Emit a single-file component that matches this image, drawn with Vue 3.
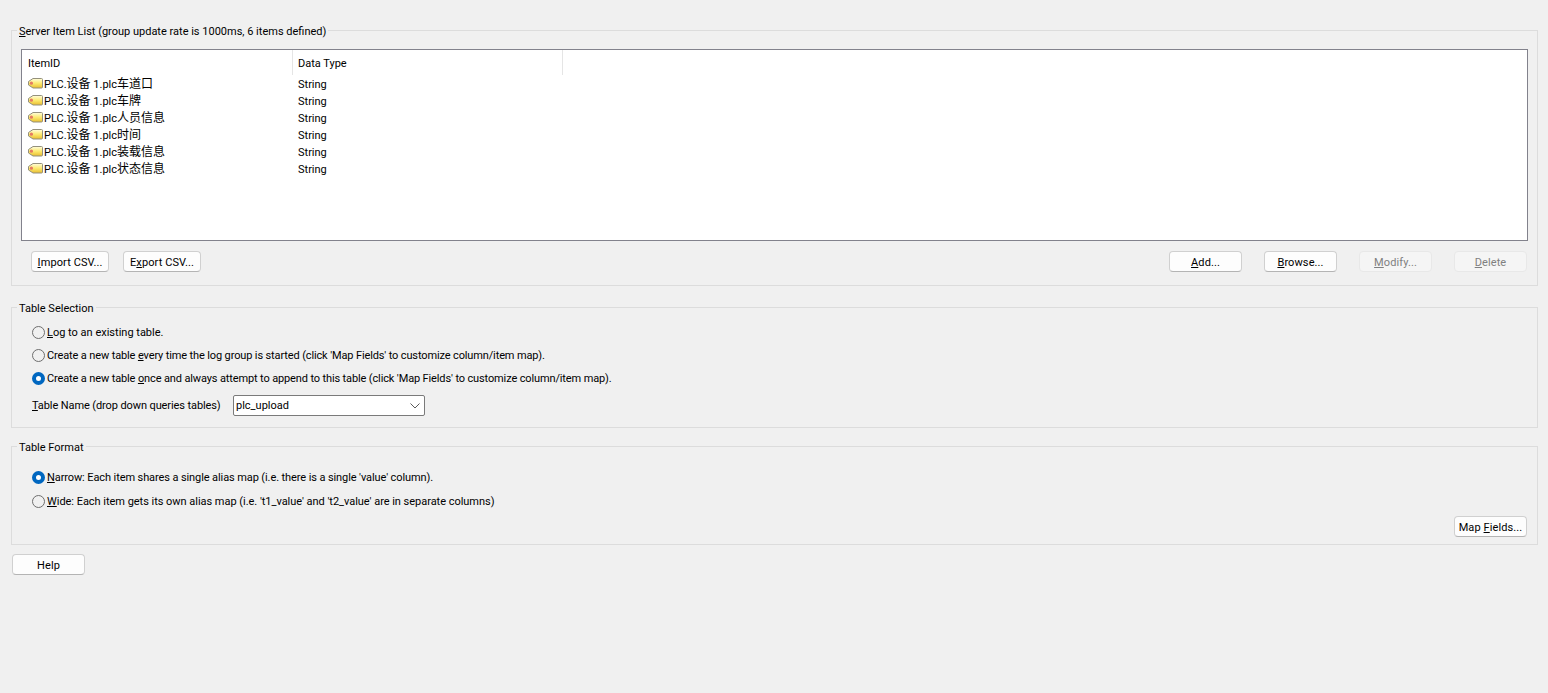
<script setup>
const items = ['车道口', '车牌', '人员信息', '时间', '装载信息', '状态信息']
</script>

<template>
  <main class="page">
    <fieldset class="group server">
      <legend><span class="lg"><u>S</u>erver Item List (group update rate is 1000ms, 6 items defined)</span></legend>
      <div class="list">
        <div class="list-head">
          <div class="col-id">ItemID</div>
          <div class="col-type">Data Type</div>
        </div>
        <div class="list-row" v-for="item in items" :key="item">
          <div class="col-id cell">
            <svg class="tag" width="15" height="11" viewBox="0 0 15 11">
              <defs>
                <linearGradient id="tagfill" x1="0" y1="0" x2="0" y2="1">
                  <stop offset="0" stop-color="#fffde0" />
                  <stop offset="0.5" stop-color="#fcea70" />
                  <stop offset="1" stop-color="#e9bd30" />
                </linearGradient>
              </defs>
              <path d="M5 0.5 H13.5 Q14.5 0.5 14.5 1.5 V9 Q14.5 10 13.5 10 H5 L0.5 7 V3.5 Z" fill="url(#tagfill)" stroke="#94907c" />
              <circle cx="3.4" cy="5.2" r="1.6" fill="#e67a62" />
            </svg>
            <span class="t">PLC.<span class="cjk">设备</span> 1.plc<span class="cjk">{{ item }}</span></span>
          </div>
          <div class="col-type cell"><span class="t">String</span></div>
        </div>
      </div>
      <div class="actions">
        <button class="btn wide"><u>I</u>mport CSV...</button>
        <button class="btn wide">E<u>x</u>port CSV...</button>
        <div class="spacer"></div>
        <button class="btn"><u>A</u>dd...</button>
        <button class="btn"><u>B</u>rowse...</button>
        <button class="btn off" disabled><u>M</u>odify...</button>
        <button class="btn off" disabled><u>D</u>elete</button>
      </div>
    </fieldset>

    <fieldset class="group selection">
      <legend><span class="lg">Table Selection</span></legend>
      <div class="radios">
        <label class="radio"><span class="dot"></span><span class="t"><u>L</u>og to an existing table.</span></label>
        <label class="radio"><span class="dot"></span><span class="t tight">Create a new table <u>e</u>very time the log group is started (click 'Map Fields' to customize column/item map).</span></label>
        <label class="radio"><span class="dot on"></span><span class="t tight">Create a new table <u>o</u>nce and always attempt to append to this table (click 'Map Fields' to customize column/item map).</span></label>
      </div>
      <div class="name-row">
        <span class="name-label"><u>T</u>able Name (drop down queries tables)</span>
        <div class="combo">
          <span>plc_upload</span>
          <svg width="10" height="6" viewBox="0 0 10 6"><path d="M0.5 0.5 L5 5 L9.5 0.5" fill="none" stroke="#5a5a5a" /></svg>
        </div>
      </div>
    </fieldset>

    <fieldset class="group format">
      <legend><span class="lg">Table Format</span></legend>
      <div class="radios two">
        <label class="radio"><span class="dot on"></span><span class="t narrow"><u>N</u>arrow: Each item shares a single alias map (i.e. there is a single 'value' column).</span></label>
        <label class="radio"><span class="dot"></span><span class="t wide-text"><u>W</u>ide: Each item gets its own alias map (i.e. 't1_value' and 't2_value' are in separate columns)</span></label>
      </div>
      <div class="map-row">
        <button class="btn">Map <u>F</u>ields...</button>
      </div>
    </fieldset>

    <button class="btn help">Help</button>
  </main>
</template>

<style>
html, body { margin: 0; background: #f0f0f0; }
</style>

<style scoped>
.page {
  box-sizing: border-box;
  height: 693px;
  padding: 23px 10px 0 11px;
  background: #f0f0f0;
  color: #000;
  font: 11px/16px Roboto, "Noto Sans CJK SC", sans-serif;
  display: flex;
  flex-direction: column;
  overflow: hidden;
}
.cjk { font-size: 12px; }
.t { padding-top: 2px; }
.tight { letter-spacing: -0.13px; }
.narrow { letter-spacing: -0.1px; }
.wide-text { letter-spacing: -0.03px; }
.group {
  margin: 0;
  padding: 0;
  min-width: 0;
  border: 1px solid #dcdcdc;
  box-sizing: border-box;
}
.group legend {
  margin-left: 5px;
  padding: 0 2px;
  line-height: 14px;
}
.lg { position: relative; top: 2px; }
.server { height: 263px; }
.selection { height: 128px; margin-top: 14px; }
.format { height: 106px; margin-top: 11px; }
.list {
  box-sizing: border-box;
  height: 192px;
  margin: 12px 9px 0;
  border: 1px solid #82828c;
  background: #fff;
}
.list-head, .list-row { display: flex; }
.list-head { height: 25px; line-height: 27px; }
.list-row { height: 17px; line-height: 17px; }
.col-id { box-sizing: border-box; width: 271px; padding-left: 6px; flex: none; }
.col-type { box-sizing: border-box; width: 270px; padding-left: 5px; flex: none; }
.list-head .col-id, .list-head .col-type { border-right: 1px solid #e5e5e5; }
.cell { display: flex; align-items: center; }
.tag { margin-right: 1px; flex: none; }
.actions { display: flex; gap: 14px; margin: 10px 10px 0 19px; }
.spacer { flex: 1; margin-right: 8px; }
.actions .btn:nth-child(n + 5) { margin-left: 8px; }
.btn {
  box-sizing: border-box;
  width: 73px;
  height: 21px;
  padding: 2px 0 0;
  font: inherit;
  line-height: 17px;
  letter-spacing: 0.1px;
  color: #000;
  background: #fdfdfd;
  border: 1px solid #d0d0d0;
  border-bottom-color: #b4b4b4;
  border-radius: 4px;
}
.wide { width: 78px; }
.off { color: #808080; background: #f5f5f5; border-color: #e8e8e8; }
.radios { display: flex; flex-direction: column; gap: 7px; margin: 10px 0 0 20px; }
.radio { display: flex; align-items: center; height: 16px; gap: 2px; }
.dot {
  box-sizing: border-box;
  width: 13px;
  height: 13px;
  border: 1px solid #6e6e6e;
  border-radius: 50%;
  background: #f0f0f0;
  flex: none;
}
.dot.on { border: 4px solid #0067c0; background: #fff; }
.name-row { display: flex; align-items: center; margin: 9px 0 0 20px; }
.name-label { width: 201px; flex: none; white-space: nowrap; letter-spacing: -0.1px; }
.combo {
  box-sizing: border-box;
  width: 192px;
  height: 21px;
  padding: 0 4px 0 2px;
  background: #fff;
  border: 1px solid #7a7a7a;
  border-radius: 2px;
  display: flex;
  align-items: center;
  justify-content: space-between;
}
.two { margin-top: 16px; gap: 8px; }
.map-row { display: flex; justify-content: flex-end; margin: 7px 10px 0 0; }
.help { margin: 9px 0 0 1px; }
</style>
